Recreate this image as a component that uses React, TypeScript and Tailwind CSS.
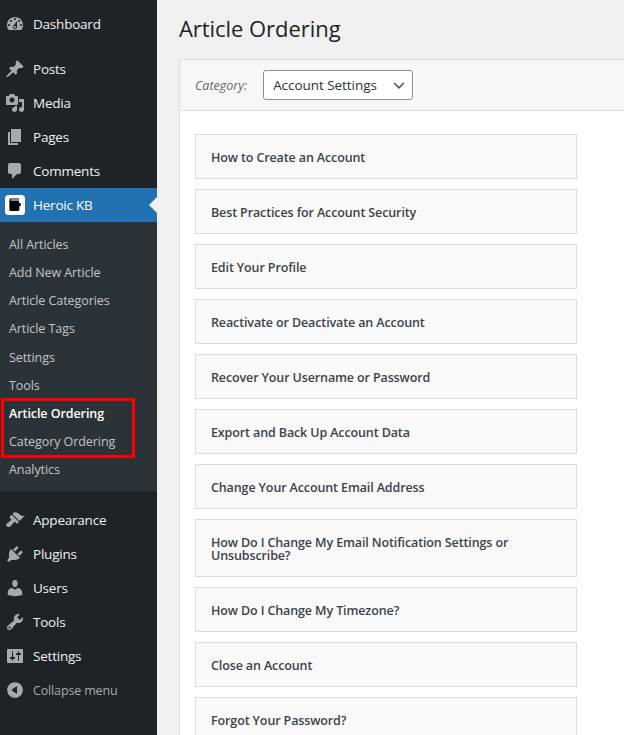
import type { ReactNode } from "react";

const ICONS: Record<string, string> = {
  dashboard:
    "M3.76 16h12.48c1.1-1.37 1.76-3.11 1.76-5 0-4.42-3.58-8-8-8s-8 3.58-8 8c0 1.89.66 3.63 1.76 5zM10 4c.55 0 1 .45 1 1s-.45 1-1 1-1-.45-1-1 .45-1 1-1zM6 6c.55 0 1 .45 1 1s-.45 1-1 1-1-.45-1-1 .45-1 1-1zm8 0c.55 0 1 .45 1 1s-.45 1-1 1-1-.45-1-1 .45-1 1-1zm-5.37 5.55L12 7v6c0 1.1-.9 2-2 2s-2-.9-2-2c0-.57.24-1.08.63-1.45zM4 10c.55 0 1 .45 1 1s-.45 1-1 1-1-.45-1-1 .45-1 1-1zm12 0c.55 0 1 .45 1 1s-.45 1-1 1-1-.45-1-1 .45-1 1-1zm-5 3c0-.55-.45-1-1-1s-1 .45-1 1 .45 1 1 1 1-.45 1-1z",
  posts:
    "M10.44 3.02l1.82-1.82 6.36 6.35-1.83 1.82c-1.05-.68-2.48-.57-3.41.36l-.75.75c-.92.93-1.04 2.35-.35 3.41l-1.83 1.82-2.41-2.41-2.8 2.79c-.42.42-3.38 2.71-3.8 2.29s1.86-3.39 2.28-3.81l2.79-2.79L4.1 9.36l1.83-1.82c1.05.69 2.48.57 3.4-.36l.75-.75c.93-.92 1.05-2.35.36-3.41z",
  media:
    "M13 11V4c0-.55-.45-1-1-1h-1.67L9 1H5L3.67 3H2c-.55 0-1 .45-1 1v7c0 .55.45 1 1 1h10c.55 0 1-.45 1-1zM7 4.5c1.38 0 2.5 1.12 2.5 2.5S8.38 9.5 7 9.5 4.5 8.38 4.5 7 5.62 4.5 7 4.5zM14 6h5v10.5c0 1.38-1.12 2.5-2.5 2.5S14 17.88 14 16.5s1.12-2.5 2.5-2.5c.17 0 .34.02.5.05V9h-3V6zm-4 8.05V13h2v3.5c0 1.38-1.12 2.5-2.5 2.5S7 17.88 7 16.5 8.12 14 9.5 14c.17 0 .34.02.5.05z",
  pages: "M6 15V2h10v13H6zm-1 1h8v2H3V5h2v11z",
  comments:
    "M5 2h9c1.1 0 2 .9 2 2v7c0 1.1-.9 2-2 2h-2l-5 5v-5H5c-1.1 0-2-.9-2-2V4c0-1.1.9-2 2-2z",
  appearance:
    "M14.48 11.06L7.41 3.99l1.5-1.5c.5-.56 2.3-.47 3.51.32 1.21.8 1.43 1.28 2.91 2.1 1.18.64 2.45 1.26 4.45.85zm-.71.71L6.7 4.7 4.93 6.47c-.39.39-.39 1.02 0 1.41l1.06 1.06c.39.39.39 1.03 0 1.42-.6.6-1.43 1.11-2.21 1.69-.35.26-.7.53-1.01.84C1.43 13.23.4 14.7 2 16.3c1.6 1.6 3.07.57 4.41-.77.31-.31.58-.66.84-1.01.58-.78 1.09-1.61 1.69-2.21.39-.39 1.03-.39 1.42 0l1.06 1.06c.39.39 1.02.39 1.41 0z",
  plugins:
    "M13.11 4.36L9.87 7.6 8 5.73l3.24-3.24c.35-.34 1.05-.2 1.56.32.52.51.66 1.21.31 1.55zm-8 1.77l.91-1.12 9.01 9.01-1.19.84c-.71.71-2.63 1.16-3.82 1.16H6.14L4.9 17.26c-.59.59-1.54.59-2.12 0-.59-.58-.59-1.53 0-2.12l1.24-1.24v-3.88c0-1.13.4-3.19 1.09-3.89zm7.26 3.97l3.24-3.24c.34-.35 1.04-.21 1.55.31.52.51.66 1.21.31 1.55l-3.24 3.25z",
  users:
    "M10 9.25c-2.27 0-2.73-3.44-2.73-3.44C7 4.02 7.82 2 9.97 2c2.16 0 2.98 2.02 2.71 3.81 0 0-.41 3.44-2.68 3.44zm0 2.57L12.72 10c2.39 0 4.52 2.33 4.52 4.53v2.49s-3.65 1.13-7.24 1.13c-3.65 0-7.24-1.13-7.24-1.13v-2.49c0-2.25 1.94-4.53 4.47-4.53z",
  tools:
    "M16.68 9.77c-1.34 1.34-3.3 1.67-4.95.99l-5.41 6.52c-.99.99-2.59.99-3.58 0s-.99-2.59 0-3.57l6.52-5.42c-.68-1.65-.35-3.61.99-4.95 1.28-1.28 3.12-1.62 4.72-1.06l-2.89 2.89 2.82 2.82 2.86-2.87c.53 1.58.18 3.39-1.08 4.65zM3.81 16.21c.4.39 1.04.39 1.43 0 .4-.4.4-1.04 0-1.44-.39-.39-1.03-.39-1.43 0-.39.4-.39 1.04 0 1.44z",
  settings:
    "M18 16V4c0-.55-.45-1-1-1H3c-.55 0-1 .45-1 1v12c0 .55.45 1 1 1h14c.55 0 1-.45 1-1zM8 11h1c.55 0 1 .45 1 1s-.45 1-1 1H8v1.5c0 .28-.22.5-.5.5s-.5-.22-.5-.5V13H6c-.55 0-1-.45-1-1s.45-1 1-1h1V5.5c0-.28.22-.5.5-.5s.5.22.5.5V11zm5-2h-1c-.55 0-1-.45-1-1s.45-1 1-1h1V5.5c0-.28.22-.5.5-.5s.5.22.5.5V7h1c.55 0 1 .45 1 1s-.45 1-1 1h-1v5.5c0 .28-.22.5-.5.5s-.5-.22-.5-.5V9z",
  collapse:
    "M10 2.16c4.33 0 7.84 3.51 7.84 7.84s-3.51 7.84-7.84 7.84S2.16 14.33 2.16 10 5.71 2.16 10 2.16zm2 11.72V6.12L6.18 9.97z",
};

const SUBMENU = [
  "All Articles",
  "Add New Article",
  "Article Categories",
  "Article Tags",
  "Settings",
  "Tools",
  "Article Ordering",
  "Category Ordering",
  "Analytics",
];

const ARTICLES = [
  "How to Create an Account",
  "Best Practices for Account Security",
  "Edit Your Profile",
  "Reactivate or Deactivate an Account",
  "Recover Your Username or Password",
  "Export and Back Up Account Data",
  "Change Your Account Email Address",
  "How Do I Change My Email Notification Settings or Unsubscribe?",
  "How Do I Change My Timezone?",
  "Close an Account",
  "Forgot Your Password?",
];

function MenuItem({ icon, children }: { icon: string; children: ReactNode }) {
  return (
    <div className="flex h-[34px] items-center pl-[5px] text-[13.5px] tracking-[-0.22px] text-[#f0f0f1]">
      <svg viewBox="0 0 20 20" className="h-5 w-5 shrink-0 fill-[#a7aaad]">
        <path d={ICONS[icon]} />
      </svg>
      <span className="ml-2">{children}</span>
    </div>
  );
}

function Sidebar() {
  return (
    <aside className="relative w-[157px] shrink-0 bg-[#1d2327] pt-[7px]">
      <MenuItem icon="dashboard">Dashboard</MenuItem>
      <div className="h-[11px]" />
      <MenuItem icon="posts">Posts</MenuItem>
      <MenuItem icon="media">Media</MenuItem>
      <MenuItem icon="pages">Pages</MenuItem>
      <MenuItem icon="comments">Comments</MenuItem>

      {/* Current menu */}
      <div className="relative flex h-[34px] items-center bg-[#2271b1] pl-[5px] text-[13.5px] tracking-[-0.22px] text-white">
        <svg viewBox="0 0 20 20" className="h-5 w-5 shrink-0">
          <rect width="20" height="20" rx="3.5" fill="#fff" />
          <path d="M4.4 5C4.4 4 5 3.4 6 3.4H14V4.4H6V5.6H14V8H15.7V11H14.4V14.6C14.4 15.6 13.8 16 13 16H6C5 16 4.4 15.4 4.4 14.4Z" fill="#000" />
          <rect x="5.6" y="4.4" width="8.4" height="1.2" fill="#8a8a8a" />
        </svg>
        <span className="ml-2">Heroic KB</span>
        <span className="absolute right-0 top-[9px] h-0 w-0 border-y-8 border-r-8 border-y-transparent border-r-[#f0f0f1]" />
      </div>

      <div className="bg-[#2c3338] pb-[5.8px] pt-[9.2px]">
        {SUBMENU.map((item) => (
          <div
            key={item}
            className={
              item === "Article Ordering"
                ? "flex h-[28.2px] items-center pl-[9px] text-[12.5px] font-semibold tracking-[-0.07px] text-white"
                : "flex h-[28.2px] items-center pl-[9px] text-[12.5px] tracking-[-0.07px] text-[#c3c4c7]"
            }
          >
            {item}
          </div>
        ))}
      </div>
      <div className="h-3" />

      <MenuItem icon="appearance">Appearance</MenuItem>
      <MenuItem icon="plugins">Plugins</MenuItem>
      <MenuItem icon="users">Users</MenuItem>
      <MenuItem icon="tools">Tools</MenuItem>
      <MenuItem icon="settings">Settings</MenuItem>
      <div className="flex h-[34px] items-center pl-[5px] text-[12.5px] tracking-[-0.15px] text-[#a7aaad]">
        <svg viewBox="0 0 20 20" className="h-5 w-5 shrink-0 fill-[#a7aaad]">
          <path d={ICONS.collapse} />
        </svg>
        <span className="ml-2 pt-[3px]">Collapse menu</span>
      </div>

      {/* Highlight drawn over the screenshot */}
      <div className="absolute left-[1px] top-[398px] h-[60px] w-[134px] border-[3px] border-[#ff0000]" />
    </aside>
  );
}

export default function App() {
  return (
    <div className="flex h-[735px] w-[624px] overflow-hidden bg-[#f0f0f1] font-['Open_Sans','Liberation_Sans',sans-serif]">
      <Sidebar />
      <main className="min-w-0 flex-1 pl-[22px]">
        <h1 className="flex h-[59px] items-center pb-[2px] text-[22px] font-normal tracking-[-0.05px] text-[#1d2327]">
          Article Ordering
        </h1>
        <div className="w-[460px] border border-r-0 border-[#dcdcde] bg-white">
          <div className="flex h-[51px] items-center border-b border-[#dcdcde] bg-[#f6f7f7] pl-[15px]">
            <span className="pt-[2px] text-[12.5px] italic text-[#646970]">Category:</span>
            <div className="ml-[16px] flex h-[30px] w-[150px] items-center justify-between rounded-[3px] border border-[#8c8f94] bg-white pl-[9px] pr-[5px] text-[13.5px] tracking-[-0.05px] text-[#2c3338]">
              Account Settings
              <svg viewBox="0 0 20 20" className="h-4 w-4 fill-none stroke-[#50575e] stroke-2">
                <path d="M4 7.5L10 13.5l6-6" />
              </svg>
            </div>
          </div>
          <div className="flex flex-col gap-[10px] px-[15px] pt-[23px]">
            {ARTICLES.map((title) => (
              <div
                key={title}
                className="flex min-h-[45px] w-[382px] items-center border border-[#dcdcde] bg-[#f9f9f9] px-[15px] pb-[14px] pt-[16px] text-[12.5px] font-semibold leading-[13px] tracking-[-0.12px] text-[#3c434a]"
              >
                {title}
              </div>
            ))}
          </div>
        </div>
      </main>
    </div>
  );
}
